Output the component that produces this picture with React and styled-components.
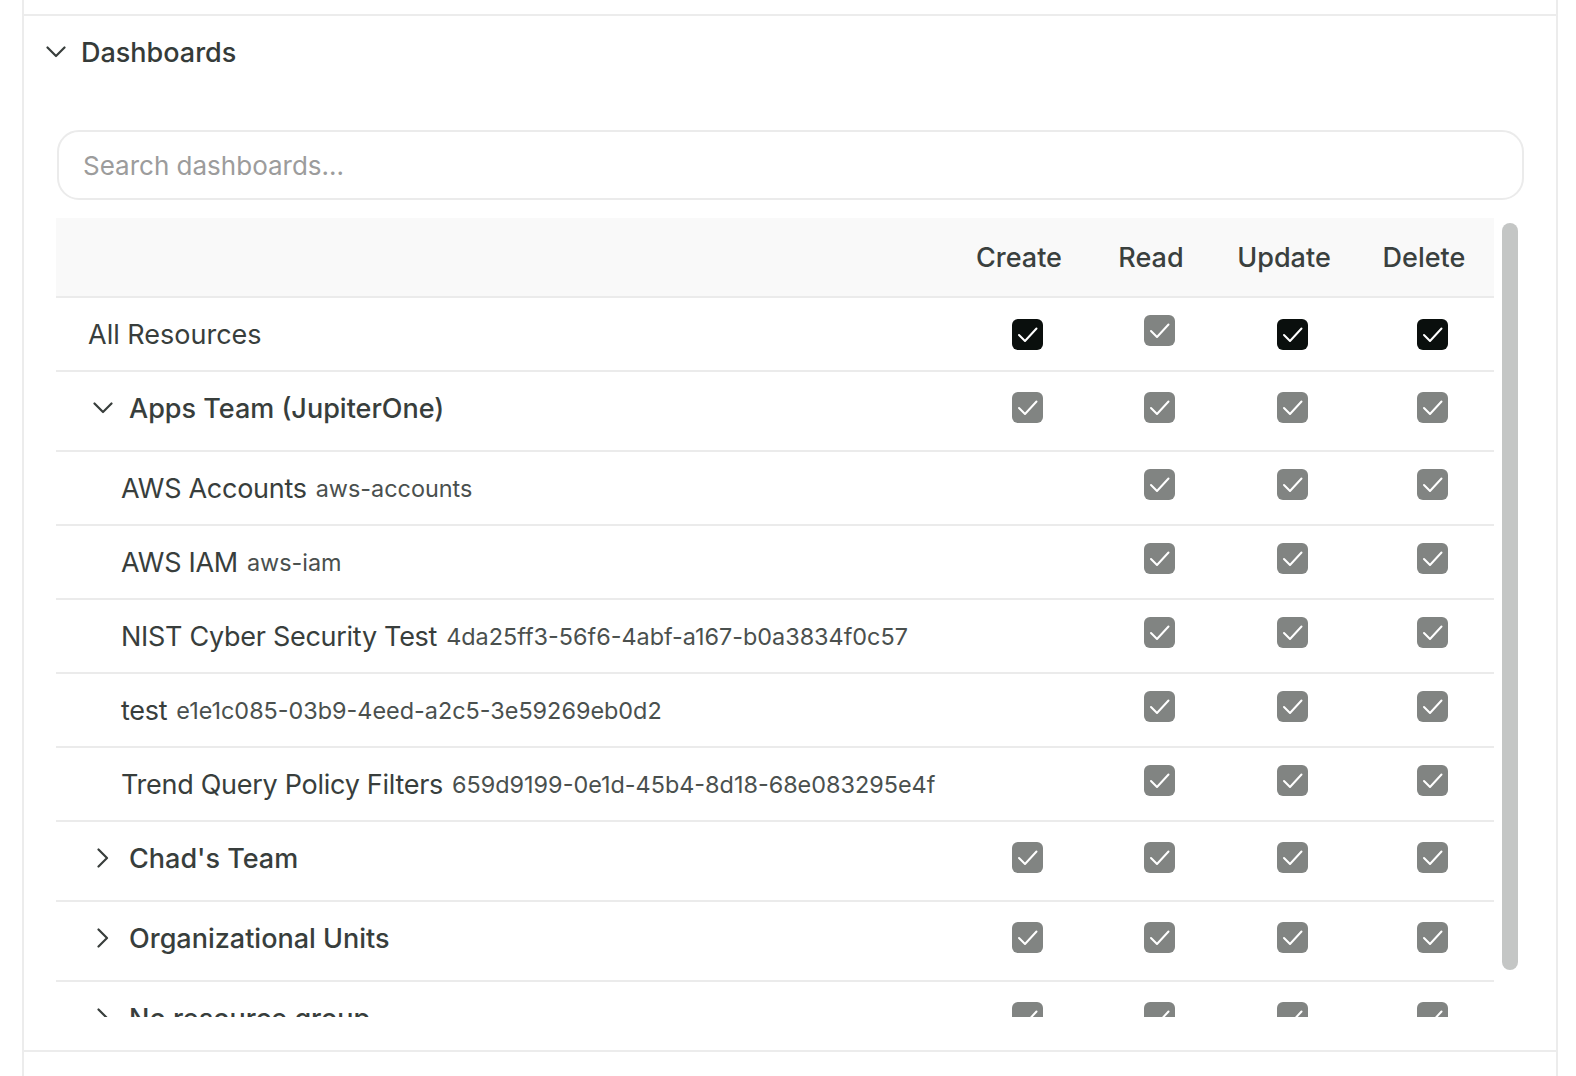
import React from "react";
import styled, { createGlobalStyle, css } from "styled-components";

const GlobalStyle = createGlobalStyle`
  html, body {
    margin: 0;
    padding: 0;
    background: #ffffff;
  }
  body {
    font-family: Inter, "Liberation Sans", "Noto Sans", sans-serif;
    color: #383e3c;
    -webkit-font-smoothing: antialiased;
  }
  * {
    box-sizing: border-box;
  }
`;

const Page = styled.div`
  padding: 0 18px 0 22px;
  min-height: 100vh;
  display: flex;
`;

const Panel = styled.div`
  flex: 1;
  border-left: 2px solid #ececec;
  border-right: 2px solid #ececec;
  display: flex;
  flex-direction: column;
`;

const PrevSection = styled.div`
  height: 14px;
`;

const Section = styled.section`
  border-top: 2px solid #ececec;
  border-bottom: 2px solid #ececec;
`;

const SectionHeader = styled.button`
  all: unset;
  display: flex;
  align-items: center;
  gap: 13px;
  height: 72px;
  padding-left: 20px;
  cursor: pointer;
`;

const SectionTitle = styled.h3`
  margin: 0;
  font-size: 27px;
  font-weight: 500;
  color: #353b39;
`;

const SectionBody = styled.div`
  padding: 42px 32px 33px 32px;
  display: flex;
  flex-direction: column;
  gap: 18px;
`;

const SearchInput = styled.input`
  height: 70px;
  border: 2px solid #ebebeb;
  border-radius: 22px;
  padding: 0 24px;
  font-family: inherit;
  font-size: 26px;
  color: #383e3c;
  outline: none;
  margin-left: 1px;
  &::placeholder {
    color: #9c9c9c;
  }
`;

const TableWrap = styled.div`
  display: flex;
`;

const Viewport = styled.div`
  flex: 1;
  height: 799px;
  overflow: hidden;
`;

const ScrollGutter = styled.div`
  width: 30px;
  padding: 5px 6px 0 8px;
`;

const Thumb = styled.div`
  height: 747px;
  border-radius: 8px;
  background: #c4c6c5;
`;

const grid = css`
  display: grid;
  grid-template-columns: 1fr 154px 110px 156px 124px;
  align-items: center;
  border-bottom: 2px solid #ebebeb;
`;

const HeaderRow = styled.div`
  ${grid};
  height: 80px;
  background: #f9f9f9;
`;

const HeaderCell = styled.div`
  text-align: center;
  padding-right: 16px;
  font-size: 27px;
  font-weight: 500;
  color: #3a403e;
`;

const Row = styled.div`
  ${grid};
  height: ${(p) => (p.$kind === "group" ? 80 : 74)}px;
`;

const NameCell = styled.div`
  display: flex;
  align-items: center;
  gap: ${(p) => (p.$kind === "group" ? 14 : 0)}px;
  padding-left: ${(p) =>
    p.$kind === "group" ? 35 : p.$kind === "leaf" ? 65 : 32}px;
  padding-bottom: ${(p) => (p.$kind === "group" ? 6 : 0)}px;
  font-size: 27px;
  font-weight: ${(p) => (p.$kind === "group" ? 500 : 400)};
  letter-spacing: ${(p) => (p.$kind === "leaf" ? "-0.28px" : "0")};
  color: #383e3c;
  white-space: nowrap;
`;

const Slug = styled.span`
  font-size: 23.4px;
  letter-spacing: 0;
  color: #4a504e;
  margin-left: 9px;
`;

const Toggle = styled.span`
  width: 24px;
  height: 24px;
  display: flex;
  align-items: center;
  justify-content: center;
  color: #383e3c;
`;

const Cell = styled.div`
  display: flex;
  justify-content: center;
  align-items: center;
`;

const Box = styled.span`
  width: 31px;
  height: 31px;
  border-radius: 6px;
  display: flex;
  align-items: center;
  justify-content: center;
  background: ${(p) => (p.$disabled ? "#818482" : "#0a0f0d")};
  margin-bottom: ${(p) => (p.$disabled ? 8 : 0)}px;
`;

const ChevronDown = () => (
  <svg width="20" height="12" viewBox="0 0 20 12" fill="none">
    <polyline
      points="1.5,1.5 10,10 18.5,1.5"
      stroke="currentColor"
      strokeWidth="2.2"
      strokeLinecap="round"
      strokeLinejoin="round"
    />
  </svg>
);

const ChevronRight = () => (
  <svg width="12" height="20" viewBox="0 0 12 20" fill="none">
    <polyline
      points="1.5,1.5 10,10 1.5,18.5"
      stroke="currentColor"
      strokeWidth="2.2"
      strokeLinecap="round"
      strokeLinejoin="round"
    />
  </svg>
);

const Checkbox = ({ state }) => {
  if (!state) return <Cell />;
  return (
    <Cell>
      <Box $disabled={state === "dis"} role="checkbox" aria-checked="true">
        <svg width="31" height="31" viewBox="0 0 31 31" fill="none">
          <polyline
            points="7,16 13,22 24.5,9.5"
            stroke="#ffffff"
            strokeWidth="2"
            strokeLinecap="round"
            strokeLinejoin="round"
          />
        </svg>
      </Box>
    </Cell>
  );
};

const D = "dis";
const ALL_DIS = [D, D, D, D];
const LEAF = [null, D, D, D];

const rows = [
  { kind: "all", name: "All Resources", perms: ["on", D, "on", "on"] },
  { kind: "group", open: true, name: "Apps Team (JupiterOne)", perms: ALL_DIS },
  { kind: "leaf", name: "AWS Accounts", slug: "aws-accounts", perms: LEAF },
  { kind: "leaf", name: "AWS IAM", slug: "aws-iam", perms: LEAF },
  {
    kind: "leaf",
    name: "NIST Cyber Security Test",
    slug: "4da25ff3-56f6-4abf-a167-b0a3834f0c57",
    perms: LEAF,
  },
  {
    kind: "leaf",
    name: "test",
    slug: "e1e1c085-03b9-4eed-a2c5-3e59269eb0d2",
    perms: LEAF,
  },
  {
    kind: "leaf",
    name: "Trend Query Policy Filters",
    slug: "659d9199-0e1d-45b4-8d18-68e083295e4f",
    perms: LEAF,
  },
  { kind: "group", open: false, name: "Chad's Team", perms: ALL_DIS },
  { kind: "group", open: false, name: "Organizational Units", perms: ALL_DIS },
  { kind: "group", open: false, name: "No resource group", perms: ALL_DIS },
];

const columns = ["Create", "Read", "Update", "Delete"];

export default function App() {
  return (
    <>
      <GlobalStyle />
      <Page>
        <Panel>
          <PrevSection />
          <Section>
            <SectionHeader>
              <Toggle>
                <ChevronDown />
              </Toggle>
              <SectionTitle>Dashboards</SectionTitle>
            </SectionHeader>
            <SectionBody>
              <SearchInput placeholder="Search dashboards..." />
              <TableWrap>
                <Viewport>
                  <HeaderRow>
                    <div />
                    {columns.map((c) => (
                      <HeaderCell key={c}>{c}</HeaderCell>
                    ))}
                  </HeaderRow>
                  {rows.map((r) => (
                    <Row key={r.name} $kind={r.kind}>
                      <NameCell $kind={r.kind}>
                        {r.kind === "group" && (
                          <Toggle>
                            {r.open ? <ChevronDown /> : <ChevronRight />}
                          </Toggle>
                        )}
                        <span>{r.name}</span>
                        {r.slug && <Slug>{r.slug}</Slug>}
                      </NameCell>
                      {r.perms.map((p, i) => (
                        <Checkbox key={i} state={p} />
                      ))}
                    </Row>
                  ))}
                </Viewport>
                <ScrollGutter>
                  <Thumb />
                </ScrollGutter>
              </TableWrap>
            </SectionBody>
          </Section>
        </Panel>
      </Page>
    </>
  );
}
